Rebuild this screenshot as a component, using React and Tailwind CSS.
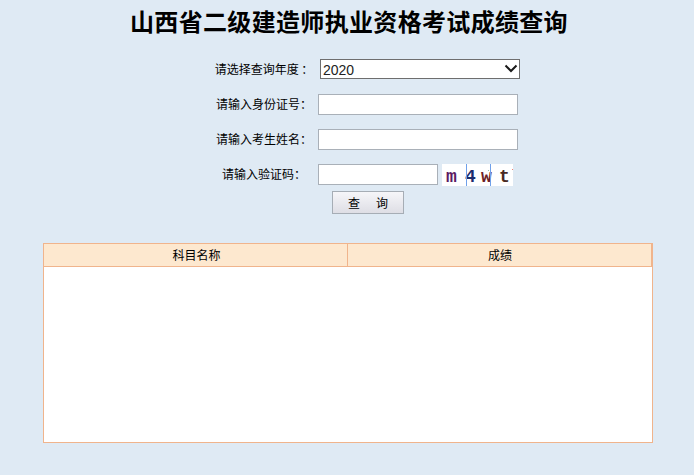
import React from 'react';

const cjk = "font-['Noto_Sans_CJK_SC',sans-serif]";

function Row({ label, children }) {
    return (
        <div className="flex items-start h-[21px] pl-[211px]">
            <label className="w-[107px] pr-[1px] h-[21px] leading-[20px] text-center text-[12px] text-black whitespace-pre">{label}</label>
            {children}
        </div>
    );
}

function Captcha() {
    return (
        <div className="relative ml-[4px] w-[71px] h-[22px] bg-white flex items-center pl-[4px] pt-[3px] font-['Liberation_Mono',monospace] font-bold text-[18px] leading-none">
            <span className="w-[19px] text-[#5c1c62]">m</span>
            <span className="w-[16px] text-[#1c2c6c]">4</span>
            <span className="w-[18px] text-[#6e1f28]">w</span>
            <span className="text-[#4a2a24]">t</span>
            <div className="absolute left-[24px] top-0 w-px h-full bg-[#6fa0ea]"></div>
            <div className="absolute left-[48px] top-0 w-px h-full bg-[#6fa0ea]"></div>
            <div className="absolute left-[46px] top-[6px] w-px h-px bg-[#8fc0a8]"></div>
            <div className="absolute left-[70px] top-[5px] w-px h-px bg-[#f08070]"></div>
        </div>
    );
}

export default function App() {
    return (
        <div className={`min-h-screen bg-[#dfeaf4] overflow-hidden ${cjk}`}>
            <h1 className="h-[59px] pt-[4px] pl-[4px] text-center text-[24px] leading-[34px] font-bold tracking-[0.33px] text-black">
                山西省二级建造师执业资格考试成绩查询
            </h1>

            <div className="flex flex-col gap-[14px]">
                <Row label="请选择查询年度 ：">
                    <div className="relative ml-[2px] w-[200px] h-[20px]">
                        <select className="block w-full h-full appearance-none bg-white border border-[#6e6e6e] pl-[2px] pb-[2px] text-[14px] text-[#222] font-['Liberation_Sans',sans-serif] outline-none">
                            <option>2020</option>
                        </select>
                        <svg className="absolute right-[2px] top-[4px] w-[14px] h-[11px]" viewBox="0 0 14 11" fill="none" stroke="#1a1a1a" strokeWidth="2">
                            <path d="M1.5 2.5 L7 8 L12.5 2.5" />
                        </svg>
                    </div>
                </Row>
                <Row label="请输入身份证号：">
                    <input className="w-[200px] h-[21px] bg-white border border-[#a9b0b8] outline-none" />
                </Row>
                <Row label="请输入考生姓名：">
                    <input className="w-[200px] h-[21px] bg-white border border-[#a9b0b8] outline-none" />
                </Row>
                <Row label="请输入验证码：">
                    <input className="w-[120px] h-[21px] bg-white border border-[#a9b0b8] outline-none" />
                    <Captcha />
                </Row>
            </div>

            <button className="mt-[6px] ml-[332px] w-[72px] h-[23px] flex items-center justify-center gap-[16px] border border-[#a6adb5] bg-gradient-to-b from-[#f6f6f9] to-[#dedee5] text-[12px] text-black">
                <span>查</span>
                <span>询</span>
            </button>

            <div className="mt-[29px] ml-[43px] w-[610px] h-[200px] bg-white border border-[#f0b48c]">
                <div className="flex h-[23px] bg-[#fde8cf] border-b border-[#f0b48c] text-[12px] leading-[22px] text-center text-black">
                    <div className="w-[304px] pl-[2px] border-r border-[#f0b48c]">科目名称</div>
                    <div className="flex-1 pl-[1px] border-r border-[#f0b48c]">成绩</div>
                </div>
            </div>
        </div>
    );
}
